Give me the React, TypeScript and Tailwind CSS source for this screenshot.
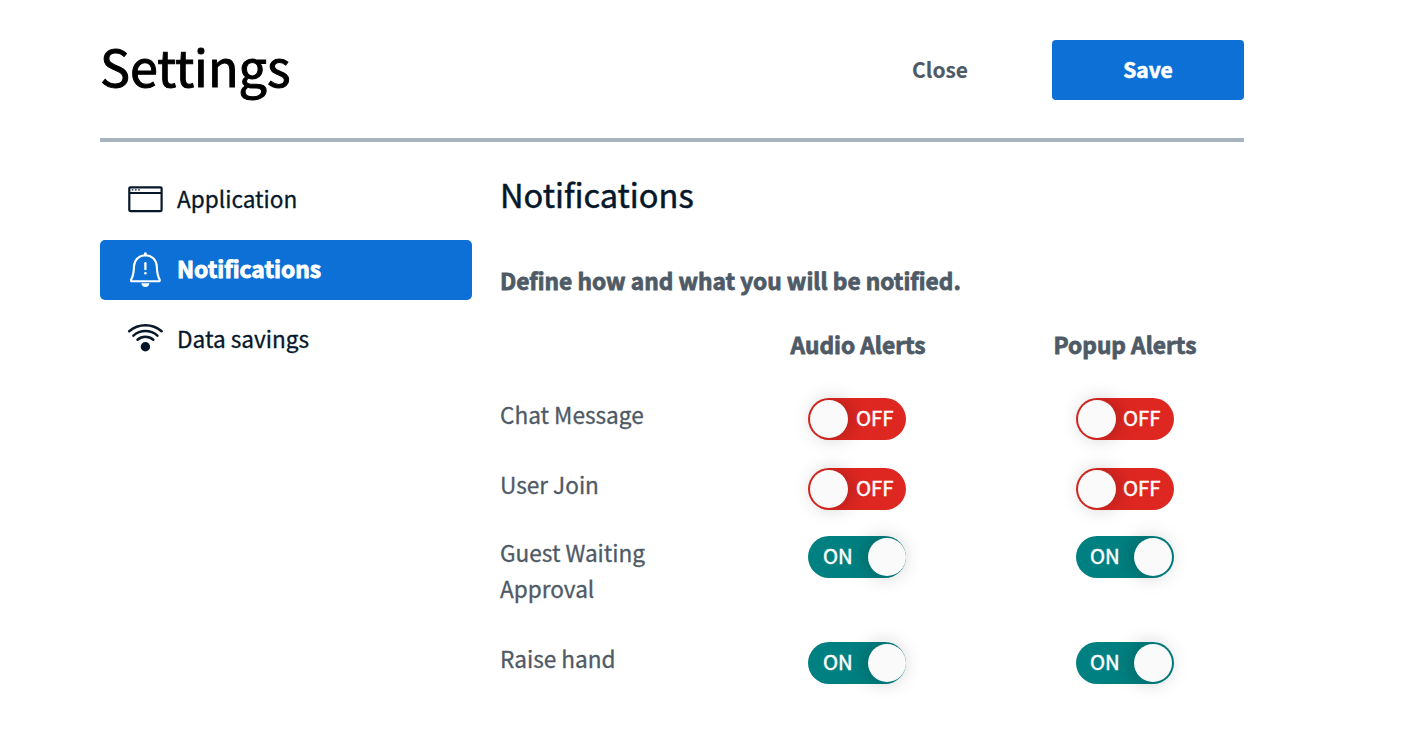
type Column = "audio" | "popup";

function Toggle({ on, column }: { on: boolean; column: Column }) {
  const audio = column === "audio";
  const textPos = on ? (audio ? "left-[15px]" : "left-[14px]") : audio ? "left-[48px]" : "left-[47px]";
  const thumbPos = on
    ? audio
      ? "left-[60px] shadow-[-3px_0px_20px_-1px_rgba(0,0,0,0.26)]"
      : "left-[58px] shadow-[-3px_0px_20px_-1px_rgba(0,0,0,0.26)]"
    : "left-[2px] shadow-[3px_0px_20px_-1px_rgba(0,0,0,0.26)]";
  return (
    <div className={`relative h-[42px] w-[98px] rounded-full ${on ? "bg-[#008081]" : "bg-[#df2721]"}`}>
      <span
        className={`absolute -top-[2px] flex h-[42px] items-center text-[20.3px] leading-none text-white [-webkit-text-stroke:0.5px_currentColor] ${textPos}`}
      >
        {on ? "ON" : "OFF"}
      </span>
      <span className={`absolute top-[2px] size-[38px] rounded-full bg-[#fafafa] ${thumbPos}`} />
    </div>
  );
}

function ApplicationIcon() {
  return (
    <svg className="mb-[2px] size-9" viewBox="0 0 36 36" fill="none" stroke="currentColor">
      <rect x="2.3" y="6.3" width="32.3" height="23.8" rx="1" strokeWidth="2.2" />
      <path d="M2.3 12H34.6" strokeWidth="2" />
      <path d="M4.8 8.9h1.6M8 8.9h1.6M11.2 8.9h1.6" strokeWidth="1.4" />
    </svg>
  );
}

function BellIcon() {
  return (
    <svg className="mb-[2px] size-9" viewBox="0 0 36 36" fill="none" stroke="currentColor" strokeLinecap="round" strokeLinejoin="round">
      <path
        d="M18.4 4.2C12.2 4.2 7.4 8.7 7 15.2C6.7 20.3 6.8 23.8 4.3 28.2C3.6 29.5 4 30.3 5.2 30.3H31.6C32.8 30.3 33.2 29.5 32.5 28.2C30 23.8 30.1 20.3 29.8 15.2C29.4 8.7 24.6 4.2 18.4 4.2Z"
        strokeWidth="2.1"
      />
      <path d="M18.4 2.7V4" strokeWidth="2.8" />
      <path d="M18.4 12.2V18.2" strokeWidth="2.3" />
      <circle cx="18.4" cy="22.2" r="1.3" fill="currentColor" stroke="none" />
      <path d="M14.4 32.2H22.4C22.2 34.6 20.8 36 18.4 36C16 36 14.6 34.6 14.4 32.2Z" fill="currentColor" stroke="none" />
    </svg>
  );
}

function DataIcon() {
  return (
    <svg className="mb-[2px] size-9" viewBox="0 0 36 36" fill="none" stroke="currentColor" strokeWidth="2.5" strokeLinecap="round">
      <path d="M2.2 10.3C11.5 2.3 25.3 2.3 34.6 10.3" />
      <path d="M6.4 14.6C13.3 8.6 23.5 8.6 30.4 14.6" />
      <path d="M10.5 18.7C15 14.8 21.8 14.8 26.3 18.7" />
      <circle cx="18.4" cy="25.8" r="4.7" fill="currentColor" stroke="none" />
    </svg>
  );
}

const rows = [
  { label: "Chat Message", on: false, cls: "h-[70px]" },
  { label: "User Join", on: false, cls: "h-[68px]" },
  { label: "Guest Waiting Approval", on: true, cls: "h-[106px]" },
  { label: "Raise hand", on: true, cls: "h-[70px]" },
];

export default function App() {
  return (
    <div className="h-[742px] w-[1404px] overflow-hidden bg-white pl-[100px] font-['Noto_Sans_CJK_SC',sans-serif] text-[22.6px] text-[#4e5a66] [-webkit-text-stroke:0.3px_currentColor]">
      <header className="flex h-[142px] w-[1144px] items-start border-b-4 border-[#a7b3bd] pt-10">
        <h1 className="flex h-[60px] flex-1 items-center pb-[9px] text-[50.3px] text-black [-webkit-text-stroke:1px_currentColor]">Settings</h1>
        <button className="h-[60px] w-[112px] pb-px text-[21px] font-bold [-webkit-text-stroke:0.1px_currentColor]">Close</button>
        <button className="ml-14 h-[60px] w-[192px] rounded bg-[#0c70d7] pb-px text-[21px] font-bold text-white [-webkit-text-stroke:0.6px_currentColor]">
          Save
        </button>
      </header>
      <main className="flex">
        <nav className="mt-7 flex w-[372px] flex-col gap-[10px] text-[#06172a]">
          <div className="flex h-[60px] items-center gap-[14px] pl-[27px]">
            <ApplicationIcon />
            <span className="pb-[2px]">Application</span>
          </div>
          <div className="flex h-[60px] items-center gap-[14px] rounded-[5px] bg-[#0c70d7] pl-[27px] text-[22.8px] font-bold text-white [-webkit-text-stroke:0.9px_currentColor]">
            <BellIcon />
            <span className="pb-[2px]">Notifications</span>
          </div>
          <div className="flex h-[60px] items-center gap-[14px] pl-[27px]">
            <DataIcon />
            <span className="pb-[2px]">Data savings</span>
          </div>
        </nav>
        <section className="ml-7 w-[740px]">
          <h2 className="mt-[25px] h-[57px] text-[32.6px] leading-[54px] text-[#06172a] [-webkit-text-stroke:0.5px_currentColor]">
            Notifications
          </h2>
          <p className="mt-[39px] h-9 text-[22.7px] font-bold leading-9 [-webkit-text-stroke:0.8px_currentColor]">
            Define how and what you will be notified.
          </p>
          <div className="mt-7 flex h-9 text-[22.7px] font-bold leading-9 [-webkit-text-stroke:0.8px_currentColor]">
            <div className="ml-[290.5px] w-[263px]">Audio Alerts</div>
            <div>Popup Alerts</div>
          </div>
          <div className="mt-[34px]">
            {rows.map((r) => (
              <div key={r.label} className={`flex ${r.cls}`}>
                <div className="w-[308px] pr-[140px] leading-9">{r.label}</div>
                <div className="mt-px w-[268px]">
                  <Toggle on={r.on} column="audio" />
                </div>
                <div className="mt-px">
                  <Toggle on={r.on} column="popup" />
                </div>
              </div>
            ))}
          </div>
        </section>
      </main>
    </div>
  );
}
